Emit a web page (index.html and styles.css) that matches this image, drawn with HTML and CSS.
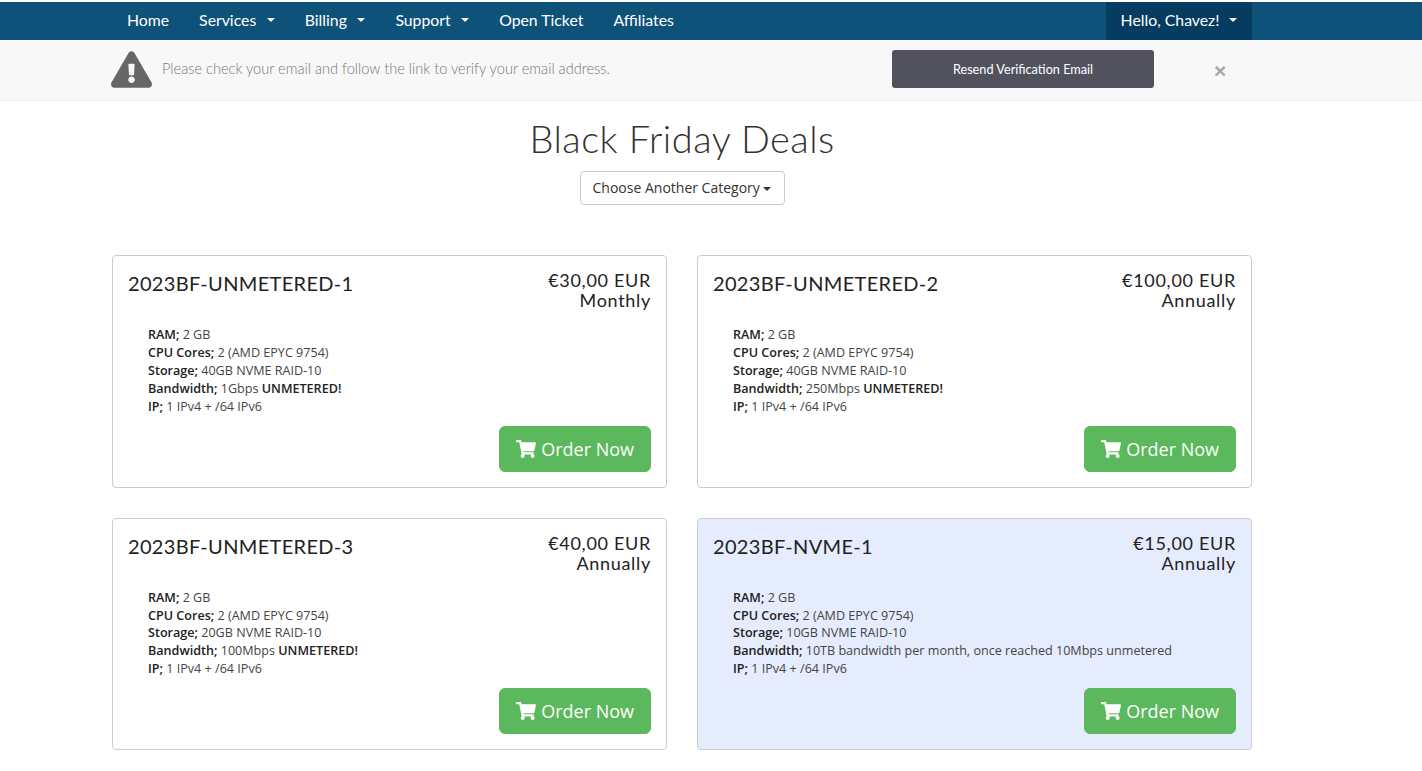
FILE: index.html
```html
<!DOCTYPE html>
<html lang="en">
<head>
<meta charset="utf-8">
<title>Black Friday Deals</title>
<link rel="stylesheet" href="styles.css">
</head>
<body>
<svg class="defs" width="0" height="0" aria-hidden="true">
  <symbol id="cart" viewBox="0 0 576 512"><path d="M528.12 301.319l47.273-208C578.806 78.301 567.391 64 551.999 64H159.208l-9.166-44.81C147.758 8.021 137.93 0 126.529 0H24C10.745 0 0 10.745 0 24v16c0 13.255 10.745 24 24 24h69.883l70.248 343.435C147.325 417.1 136 435.222 136 456c0 30.928 25.072 56 56 56s56-25.072 56-56c0-15.674-6.447-29.835-16.824-40h209.647C430.447 426.165 424 440.326 424 456c0 30.928 25.072 56 56 56s56-25.072 56-56c0-22.172-12.888-41.332-31.579-50.405l5.517-24.276c3.413-15.018-8.002-29.319-23.403-29.319H218.117l-6.545-32h293.145c11.206 0 20.92-7.754 23.403-18.681z"/></symbol>
</svg>
<nav class="navbar">
  <div class="wrap nav-inner">
    <ul class="nav-list">
      <li><a class="nav-link">Home</a></li>
      <li><a class="nav-link">Services <span class="caret caret-nav"></span></a></li>
      <li><a class="nav-link">Billing <span class="caret caret-nav"></span></a></li>
      <li><a class="nav-link">Support <span class="caret caret-nav"></span></a></li>
      <li><a class="nav-link">Open Ticket</a></li>
      <li><a class="nav-link">Affiliates</a></li>
    </ul>
    <a class="nav-link nav-user">Hello, Chavez! <span class="caret caret-nav"></span></a>
  </div>
</nav>
<div class="verify">
  <div class="wrap verify-inner">
    <svg class="warn-icon" viewBox="0 0 576 512" aria-hidden="true"><path d="M569.517 440.013C587.975 472.007 564.806 512 527.94 512H48.054c-36.937 0-59.999-40.055-41.577-71.987L246.423 24.035c18.467-32.009 64.72-31.951 83.154 0l239.94 416.026zM288 354c-25.405 0-46 20.595-46 46s20.595 46 46 46 46-20.595 46-46-20.595-46-46-46zm-43.673-165.346l7.418 136c.347 6.364 5.609 11.346 11.982 11.346h48.546c6.373 0 11.635-4.982 11.982-11.346l7.418-136c.375-6.874-5.098-12.654-11.982-12.654h-63.383c-6.884 0-12.356 5.78-11.981 12.654z"/></svg>
    <p class="verify-text">Please check your email and follow the link to verify your email address.</p>
    <button class="resend">Resend Verification Email</button>
    <span class="close">×</span>
  </div>
</div>
<main class="wrap">
  <header class="page-head">
    <h1 class="page-title">Black Friday Deals</h1>
    <button class="cat-btn">Choose Another Category <span class="caret"></span></button>
  </header>
  <section class="products">
    <article class="product">
      <div class="product-head">
        <h2 class="product-name">2023BF-UNMETERED-1</h2>
        <div class="price"><div>€30,00 EUR</div><div>Monthly</div></div>
      </div>
      <div class="specs">
        <div><b>RAM;</b> 2 GB</div>
        <div><b>CPU Cores;</b> 2 (AMD EPYC 9754)</div>
        <div><b>Storage;</b> 40GB NVME RAID-10</div>
        <div><b>Bandwidth;</b> 1Gbps <b>UNMETERED!</b></div>
        <div><b>IP;</b> 1 IPv4 + /64 IPv6</div>
      </div>
      <div class="product-foot"><button class="order"><svg class="cart"><use href="#cart"/></svg> Order Now</button></div>
    </article>
    <article class="product">
      <div class="product-head">
        <h2 class="product-name">2023BF-UNMETERED-2</h2>
        <div class="price"><div>€100,00 EUR</div><div>Annually</div></div>
      </div>
      <div class="specs">
        <div><b>RAM;</b> 2 GB</div>
        <div><b>CPU Cores;</b> 2 (AMD EPYC 9754)</div>
        <div><b>Storage;</b> 40GB NVME RAID-10</div>
        <div><b>Bandwidth;</b> 250Mbps <b>UNMETERED!</b></div>
        <div><b>IP;</b> 1 IPv4 + /64 IPv6</div>
      </div>
      <div class="product-foot"><button class="order"><svg class="cart"><use href="#cart"/></svg> Order Now</button></div>
    </article>
    <article class="product">
      <div class="product-head">
        <h2 class="product-name">2023BF-UNMETERED-3</h2>
        <div class="price"><div>€40,00 EUR</div><div>Annually</div></div>
      </div>
      <div class="specs">
        <div><b>RAM;</b> 2 GB</div>
        <div><b>CPU Cores;</b> 2 (AMD EPYC 9754)</div>
        <div><b>Storage;</b> 20GB NVME RAID-10</div>
        <div><b>Bandwidth;</b> 100Mbps <b>UNMETERED!</b></div>
        <div><b>IP;</b> 1 IPv4 + /64 IPv6</div>
      </div>
      <div class="product-foot"><button class="order"><svg class="cart"><use href="#cart"/></svg> Order Now</button></div>
    </article>
    <article class="product product-featured">
      <div class="product-head">
        <h2 class="product-name">2023BF-NVME-1</h2>
        <div class="price"><div>€15,00 EUR</div><div>Annually</div></div>
      </div>
      <div class="specs">
        <div><b>RAM;</b> 2 GB</div>
        <div><b>CPU Cores;</b> 2 (AMD EPYC 9754)</div>
        <div><b>Storage;</b> 10GB NVME RAID-10</div>
        <div><b>Bandwidth;</b> 10TB bandwidth per month, once reached 10Mbps unmetered</div>
        <div><b>IP;</b> 1 IPv4 + /64 IPv6</div>
      </div>
      <div class="product-foot"><button class="order"><svg class="cart"><use href="#cart"/></svg> Order Now</button></div>
    </article>
  </section>
</main>
</body>
</html>
```
FILE: styles.css
```css
* { box-sizing: border-box; }
html, body { margin: 0; padding: 0; }
body {
  background: #fff;
  color: #333;
  font-family: "Open Sans", "Liberation Sans", sans-serif;
  font-size: 14px;
  line-height: 1.42857;
  padding-top: 2px;
}
.defs { display: block; height: 0; }
.wrap { width: 1140px; margin-left: 112px; }

.navbar { background: #0f5279; height: 38px; }
.nav-inner { display: flex; justify-content: space-between; height: 38px; }
.nav-list { display: flex; list-style: none; margin: 0; padding: 0; }
.nav-link {
  display: flex;
  align-items: center;
  gap: 8.5px;
  height: 38px;
  padding: 0 15px 2px;
  color: #fff;
  font-family: "Lato", sans-serif;
  font-size: 15.8px;
}
.nav-user { background: #063c60; gap: 7.5px; }
.caret {
  display: inline-block;
  width: 0;
  height: 0;
  border-top: 4px solid;
  border-left: 4px solid transparent;
  border-right: 4px solid transparent;
  vertical-align: middle;
}
.caret-nav { margin-left: 2px; }

.verify { background: #f8f8f8; border-bottom: 1px solid #eee; height: 61px; }
.verify-inner { display: flex; align-items: center; height: 60px; }
.warn-icon { width: 41px; height: 37px; fill: #666; margin: -1px 10px 0 -1px; flex: none; }
.verify-text {
  flex: 1;
  margin: -2px 0 0;
  color: #777;
  font-family: "Lato", sans-serif;
  font-weight: 300;
  font-size: 14.6px;
}
.resend {
  width: 262px;
  height: 38px;
  padding: 0;
  border: 0;
  border-radius: 3px;
  background: #52525e;
  color: #fff;
  font-family: "Lato", sans-serif;
  font-size: 12.7px;
  margin-top: -3px;
}
.close {
  width: 98px;
  padding-left: 60px;
  color: #a5a5a5;
  font-family: "Liberation Sans", sans-serif;
  font-size: 21px;
  font-weight: 700;
  line-height: 1;
  margin-top: 1px;
}

.page-head { display: flex; flex-direction: column; align-items: center; padding-top: 14px; }
.page-title {
  margin: 0 0 10px;
  font-family: "Lato", sans-serif;
  font-weight: 300;
  font-size: 38px;
  letter-spacing: .45px;
  line-height: 46px;
  color: #333;
}
.cat-btn {
  height: 34px;
  width: 205px;
  padding: 0 0 2px;
  background: #fff;
  border: 1px solid #ccc;
  border-radius: 4px;
  color: #333;
  font-family: "Open Sans", sans-serif;
  font-size: 14px;
}

.products {
  display: grid;
  grid-template-columns: 555px 555px;
  grid-template-rows: 232.4px 232.2px;
  gap: 30px;
  margin-top: 50.4px;
}
.product {
  display: flex;
  flex-direction: column;
  background: #fff;
  border: 1px solid #ccc;
  border-radius: 4px;
  padding: 15px;
}
.product-featured { background: #e5ecfd; }
.product-head { display: flex; justify-content: space-between; align-items: flex-start; height: 56px; }
.product-name {
  margin: 0;
  font-family: "Lato", sans-serif;
  font-weight: 400;
  font-size: 20px;
  letter-spacing: .33px;
  line-height: 24px;
  color: #222;
}
.price {
  text-align: right;
  font-family: "Lato", sans-serif;
  font-size: 18px;
  line-height: 20px;
  letter-spacing: .7px;
  color: #222;
  margin-top: -1px;
}
.specs {
  margin-top: -1px;
  padding-left: 20px;
  font-size: 12.58px;
  line-height: 17.8px;
  color: #444;
}
.specs b { font-weight: 600; color: #222; }
.product-foot { margin-top: auto; display: flex; justify-content: flex-end; }
.order {
  display: flex;
  align-items: center;
  gap: 5px;
  height: 46px;
  padding: 0 16px;
  background: #5cb85c;
  border: 1px solid #5cb85c;
  border-radius: 6px;
  color: #fff;
  font-family: "Open Sans", sans-serif;
  font-size: 18px;
}
.cart { width: 20px; height: 18px; fill: #fff; }
```
